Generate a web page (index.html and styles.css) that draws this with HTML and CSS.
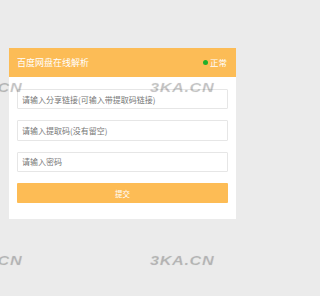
FILE: index.html
```html
<!DOCTYPE html>
<html lang="zh-CN">
<head>
<meta charset="utf-8">
<title>百度网盘在线解析</title>
<link rel="stylesheet" href="styles.css">
</head>
<body>
<div class="card">
  <div class="card-header">
    <span class="title">百度网盘在线解析</span>
    <span class="status"><i class="dot"></i>正常</span>
  </div>
  <div class="card-body">
    <input class="field" type="text" placeholder="请输入分享链接(可输入带提取码链接)">
    <input class="field" type="text" placeholder="请输入提取码(没有留空)">
    <input class="field" type="password" placeholder="请输入密码">
    <button class="submit" type="button">提交</button>
  </div>
</div>
<div class="wm wm-a">3KA.CN</div>
<div class="wm wm-b">3KA.CN</div>
<div class="wm wm-c">3KA.CN</div>
<div class="wm wm-d">3KA.CN</div>
</body>
</html>
```
FILE: styles.css
```css
html, body {
  margin: 0;
  padding: 0;
}
body {
  background: #ebebeb;
  font-family: "Noto Sans CJK SC", "Liberation Sans", sans-serif;
  width: 247px;
  height: 296px;
  overflow: hidden;
  position: relative;
}
.card {
  margin: 48px 0 0 9px;
  width: 227px;
  background: #fff;
}
.card-header {
  height: 29px;
  background: #fcbc56;
  display: flex;
  align-items: center;
  justify-content: space-between;
  padding: 0 9px 0 8px;
  color: #fff;
  font-size: 9px;
  box-sizing: border-box;
}
.title {
  line-height: 1;
}
.status {
  display: flex;
  align-items: center;
  gap: 2px;
  font-size: 8.5px;
  line-height: 1;
}
.dot {
  width: 5px;
  height: 5px;
  border-radius: 50%;
  background: #22b02a;
  display: block;
}
.card-body {
  padding: 12px 8px 16px;
  display: flex;
  flex-direction: column;
  gap: 11px;
}
.field {
  display: block;
  height: 20.3px;
  box-sizing: border-box;
  border: 1px solid #e6e6e6;
  border-radius: 1px;
  padding: 0 4px;
  margin: 0;
  font-family: "Noto Sans CJK SC", "Liberation Sans", sans-serif;
  font-size: 8px;
  color: #333;
  outline: none;
  background: #fff;
}
.field::placeholder {
  color: #777;
}
.submit {
  display: block;
  height: 20.3px;
  border: none;
  border-radius: 1px;
  background: #fdbc55;
  color: #fff;
  font-family: "Noto Sans CJK SC", "Liberation Sans", sans-serif;
  font-size: 7.5px;
  padding: 0;
  margin: 0;
}
.wm {
  position: absolute;
  font-family: "Liberation Sans", sans-serif;
  font-weight: bold;
  font-style: italic;
  font-size: 13px;
  line-height: 1;
  letter-spacing: 0.5px;
  transform: scaleX(1.25);
  transform-origin: left top;
  color: rgba(0, 0, 0, 0.16);
  text-shadow: 0 0 1px rgba(0, 0, 0, 0.1);
  pointer-events: none;
  white-space: nowrap;
}
.wm-a { left: -42px; top: 80.6px; }
.wm-b { left: 150px; top: 80.6px; }
.wm-c { left: -42px; top: 254.3px; }
.wm-d { left: 150px; top: 254.3px; }
```
